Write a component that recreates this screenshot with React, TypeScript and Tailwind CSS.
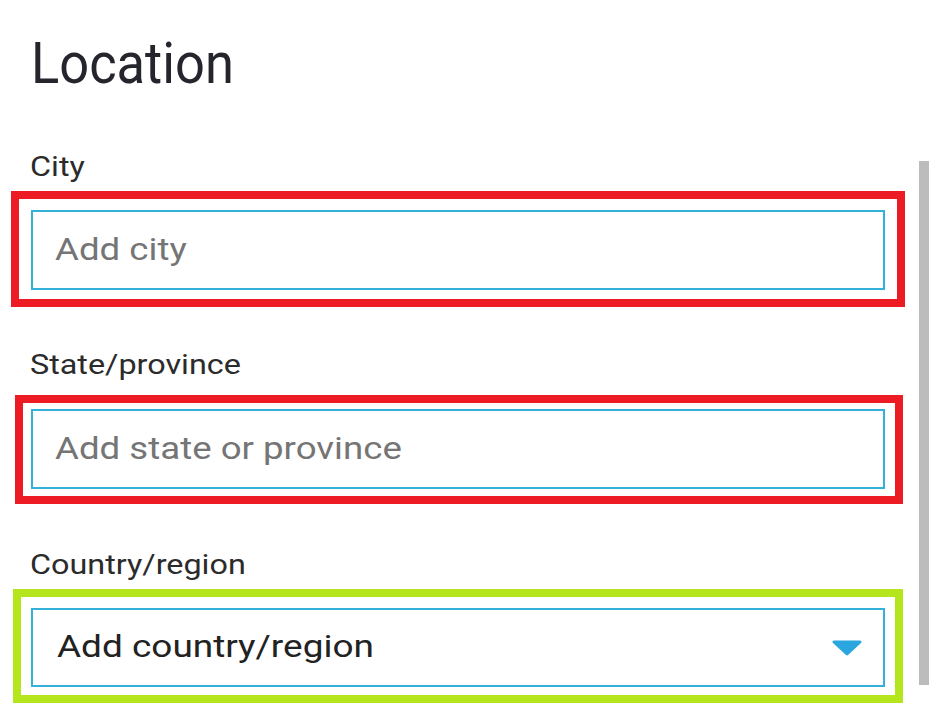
import React from 'react';

// the source screenshot is stretched sideways, so text is widened to match
const labelCls = "block pl-[30px] text-[28px] leading-none text-[#2b2b2b]";
const wide = "inline-block origin-left scale-x-[1.155] whitespace-nowrap";
const wideInput = "inline-block origin-left scale-x-[1.145] whitespace-nowrap";
const boxCls = "flex w-full items-center border-2 border-[#33b1d8] bg-white text-[32px] pb-[3px]";

const App = () => {
    return <div className="relative h-[720px] w-[944px] bg-white overflow-hidden" style={{ fontFamily: 'Roboto, "Noto Sans", sans-serif' }}>
        <div className="flex flex-col pt-[35px]">
            <h1 className="pl-[31px] text-[57px] leading-none font-normal text-[#25252d]">
                <span className="inline-block origin-left scale-x-[0.92]">Location</span>
            </h1>

            {/* city */}
            <span className={`${labelCls} mt-[61px]`}><span className={wide}>City</span></span>
            <div className="mt-[10px] ml-[11px] w-[894px] border-8 border-[#ed1c24] pt-[11px] pb-[9px] pl-[12px] pr-[12px]">
                <div className={`${boxCls} h-[80px] pl-[22px] text-[#757575]`}>
                    <span className={wideInput}>Add city</span>
                </div>
            </div>

            {/* state */}
            <span className={`${labelCls} mt-[44px]`}><span className={wide}>State/province</span></span>
            <div className="mt-[16px] ml-[15px] w-[888px] border-8 border-[#ed1c24] pt-[6px] pb-[7px] pl-[8px] pr-[10px]">
                <div className={`${boxCls} h-[80px] pl-[22px] text-[#757575]`}>
                    <span className={wideInput}>Add state or province</span>
                </div>
            </div>

            {/* country */}
            <span className={`${labelCls} mt-[47px]`}><span className={wide}>Country/region</span></span>
            <div className="mt-[10px] ml-[13px] w-[890px] border-8 border-[#b5e61d] pt-[11px] pb-[8px] pl-[10px] pr-[10px]">
                <div className={`${boxCls} h-[79px] justify-between pl-[24px] pr-[21px] text-[#222]`}>
                    <span className={wide}>Add country/region</span>
                    <svg width="30" height="16" viewBox="0 0 30 16" className="mt-[3px]">
                        <path d="M2 2 H28 L15 14 Z" fill="#2ba6df" stroke="#2ba6df" strokeWidth="3" strokeLinejoin="round" />
                    </svg>
                </div>
            </div>
        </div>

        {/* scrollbar */}
        <div className="absolute left-[919px] top-[161px] w-[10px] h-[524px] bg-[#bcbcbc]" />
    </div>;
}

export default App;
